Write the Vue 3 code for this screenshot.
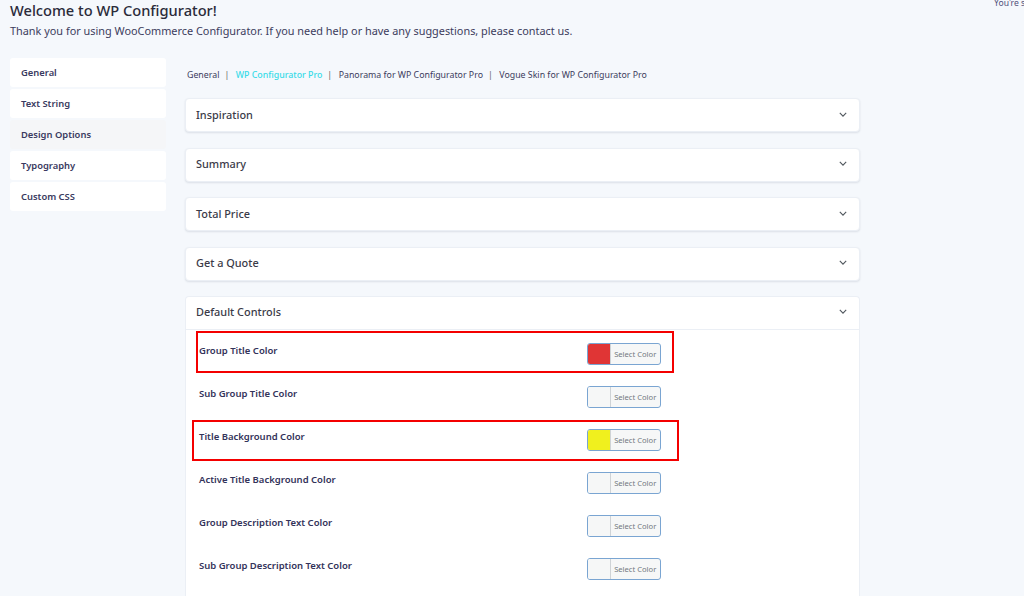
<template>
  <div class="page">
    <span class="notice">You're s</span>

    <header class="head">
      <h1>Welcome to WP Configurator!</h1>
      <p>Thank you for using WooCommerce Configurator. If you need help or have any suggestions, please contact us.</p>
    </header>

    <div class="layout">
      <nav class="side">
        <a v-for="item in sideItems" :key="item" class="side-item" :class="{ active: item === 'Design Options' }">{{ item }}</a>
      </nav>

      <main class="main">
        <div class="tabs">
          <template v-for="(tab, i) in tabs" :key="tab">
            <a class="tab" :class="{ current: i === 1 }">{{ tab }}</a>
            <span v-if="i < tabs.length - 1" class="sep">|</span>
          </template>
        </div>

        <section v-for="title in closedPanels" :key="title" class="panel closed">
          <div class="panel-head">
            <span>{{ title }}</span>
            <svg class="chev" viewBox="0 0 10 6" width="8" height="5"><path d="M1 1l4 4 4-4" fill="none" stroke="#50575e" stroke-width="1.4" /></svg>
          </div>
        </section>

        <section class="panel open">
          <div class="panel-head bordered">
            <span>Default Controls</span>
            <svg class="chev" viewBox="0 0 10 6" width="8" height="5"><path d="M1 1l4 4 4-4" fill="none" stroke="#50575e" stroke-width="1.4" /></svg>
          </div>
          <div class="rows">
            <div v-for="row in rows" :key="row.label" class="row">
              <label>{{ row.label }}</label>
              <button class="color-btn">
                <span class="swatch" :style="{ background: row.color }"></span>
                <span class="btn-text">Select Color</span>
              </button>
            </div>
          </div>
        </section>
      </main>
    </div>

    <div class="mark mark-one"></div>
    <div class="mark mark-two"></div>
  </div>
</template>

<script setup>
const sideItems = ["General", "Text String", "Design Options", "Typography", "Custom CSS"];
const tabs = ["General", "WP Configurator Pro", "Panorama for WP Configurator Pro", "Vogue Skin for WP Configurator Pro"];
const closedPanels = ["Inspiration", "Summary", "Total Price", "Get a Quote"];
const rows = [
  { label: "Group Title Color", color: "#e03535" },
  { label: "Sub Group Title Color", color: "#f6f7f7" },
  { label: "Title Background Color", color: "#f0f01e" },
  { label: "Active Title Background Color", color: "#f6f7f7" },
  { label: "Group Description Text Color", color: "#f6f7f7" },
  { label: "Sub Group Description Text Color", color: "#f6f7f7" },
];
</script>

<style>
html,
body {
  margin: 0;
  background: #f5f8fc;
  overflow: hidden;
}
</style>

<style scoped>
.page {
  position: relative;
  width: 1024px;
  height: 596px;
  overflow: hidden;
  box-sizing: border-box;
  padding: 0 0 0 10px;
  background: #f5f8fc;
  font-family: "Noto Sans", "Open Sans", sans-serif;
  color: #2c2c54;
}

.notice {
  position: absolute;
  top: 0;
  left: 994px;
  font-size: 8.6px;
  line-height: 7px;
  color: #50507a;
  white-space: nowrap;
}

.head h1 {
  margin: 0;
  font-size: 14.65px;
  line-height: 21px;
  font-weight: 500;
  color: #2b2b3a;
}

.head p {
  margin: 1px 0 0;
  font-size: 10.88px;
  line-height: 17px;
  color: #3c3c5c;
}

.layout {
  display: flex;
  margin-top: 19px;
}

.side {
  width: 156px;
  flex: none;
  display: flex;
  flex-direction: column;
  gap: 2px;
}

.side-item {
  height: 29px;
  display: flex;
  align-items: center;
  padding-left: 11px;
  padding-bottom: 1px;
  box-sizing: border-box;
  background: #fff;
  border-radius: 3px;
  font-size: 9.4px;
  font-weight: 600;
  color: #3a3a60;
}

.side-item.active {
  background: #f5f6f8;
}

.main {
  width: 675px;
  margin-left: 19px;
}

.tabs {
  display: flex;
  align-items: center;
  height: 16px;
  margin: 9px 0 15px 2px;
  font-size: 8.8px;
  color: #3c3c5c;
  white-space: nowrap;
}

.tab.current {
  color: #38dbe8;
  font-weight: 500;
}

.sep {
  margin: 0 6.5px 0 5px;
  color: #666;
}

.panel {
  background: #fff;
  border: 1px solid #ebeff5;
  border-radius: 4px;
  box-sizing: border-box;
  box-shadow: 0 1px 2px rgba(40, 50, 80, 0.12);
}

.panel.closed {
  height: 34px;
  margin-bottom: 15.5px;
}

.panel.open {
  height: 340px;
  border-bottom: none;
  box-shadow: none;
}

.panel-head {
  height: 100%;
  display: flex;
  align-items: center;
  justify-content: space-between;
  padding: 0 12px 2px 10px;
  box-sizing: border-box;
  font-size: 10.9px;
  font-weight: 500;
  color: #3a3a48;
}

.panel-head.bordered {
  height: 32.5px;
  border-bottom: 1px solid #ebeff5;
}

.chev {
  display: block;
}

.rows {
  padding-top: 2px;
}

.row {
  display: flex;
  align-items: flex-start;
  justify-content: space-between;
  height: 43.2px;
  padding: 11px 198px 0 13px;
  box-sizing: border-box;
}

.row label {
  font-size: 9.5px;
  line-height: 16px;
  font-weight: 600;
  color: #33335a;
}

.color-btn {
  display: flex;
  width: 74.5px;
  height: 22px;
  padding: 0;
  border: 1px solid #7aa5d2;
  border-radius: 3px;
  background: #f6f7f7;
  overflow: hidden;
  font-family: inherit;
}

.swatch {
  width: 22px;
  height: 100%;
  flex: none;
  border-right: 1px solid #cfd3d6;
}

.btn-text {
  flex: 1;
  font-size: 7.6px;
  line-height: 20px;
  text-align: center;
  color: #72787e;
  white-space: nowrap;
}

.mark {
  position: absolute;
  box-sizing: border-box;
  border: 2px solid #f40000;
  pointer-events: none;
}

.mark-one {
  left: 196px;
  top: 331px;
  width: 478px;
  height: 42px;
}

.mark-two {
  left: 192px;
  top: 420px;
  width: 487px;
  height: 41px;
}
</style>
